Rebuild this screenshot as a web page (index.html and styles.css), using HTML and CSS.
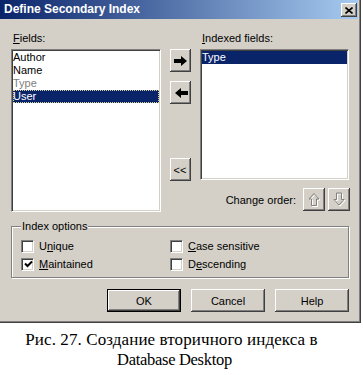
FILE: index.html
```html
<!DOCTYPE html>
<html>
<head>
<meta charset="utf-8">
<link rel="stylesheet" href="styles.css">
</head>
<body>
<div class="dialog">
  <div class="titlebar">
    <span class="title">Define Secondary Index</span>
    <span class="close"><svg width="8" height="7" viewBox="0 0 8 7"><path d="M0.5 0.5 L7.5 6.5 M7.5 0.5 L0.5 6.5" stroke="#000" stroke-width="1.6" fill="none"/></svg></span>
  </div>
  <div class="body">
    <div class="main">
      <div class="col-left">
        <div class="label"><u>F</u>ields:</div>
        <div class="list list-left">
          <div class="item">Author</div>
          <div class="item">Name</div>
          <div class="item disabled">Type</div>
          <div class="item selected focus">User</div>
        </div>
      </div>
      <div class="col-btns">
        <div class="btn sq"><svg width="14" height="10" viewBox="0 0 14 10"><path d="M0 3 H7 V0 L13 5 L7 10 V7 H0 Z" fill="#000"/></svg></div>
        <div class="btn sq gap9"><svg width="14" height="10" viewBox="0 0 14 10"><path d="M14 3 H7 V0 L1 5 L7 10 V7 H14 Z" fill="#000"/></svg></div>
        <div class="btn sq all">&lt;&lt;</div>
      </div>
      <div class="col-right">
        <div class="label"><u>I</u>ndexed fields:</div>
        <div class="list list-right">
          <div class="item selected">Type</div>
        </div>
        <div class="order">
          <span class="order-label">Change order:</span>
          <div class="btn ord"><svg width="13" height="16" viewBox="0 0 13 16"><path d="M2 8 L7 2.5 L12 8 H9.5 V14.5 H4.5 V8 Z" fill="none" stroke="#fff" stroke-width="1"/><path d="M1 7 L6 1.5 L11 7 H8.5 V13.5 H3.5 V7 Z" fill="none" stroke="#808080" stroke-width="1"/></svg></div>
          <div class="btn ord"><svg width="13" height="16" viewBox="0 0 13 16"><path d="M2 8.5 L7 14 L12 8.5 H9.5 V2 H4.5 V8.5 Z" fill="none" stroke="#fff" stroke-width="1"/><path d="M1 7.5 L6 13 L11 7.5 H8.5 V1 H3.5 V7.5 Z" fill="none" stroke="#808080" stroke-width="1"/></svg></div>
        </div>
      </div>
    </div>
    <fieldset class="group">
      <legend>Index options</legend>
      <div class="opts">
        <div class="opt"><span class="cb"></span><span>U<u>n</u>ique</span></div>
        <div class="opt"><span class="cb"></span><span><u>C</u>ase sensitive</span></div>
        <div class="opt"><span class="cb"><svg width="9" height="9" viewBox="0 0 9 9"><path d="M1 3.5 L3.5 6 L8 1.5" stroke="#000" stroke-width="2" fill="none"/></svg></span><span><u>M</u>aintained</span></div>
        <div class="opt"><span class="cb"></span><span>D<u>e</u>scending</span></div>
      </div>
    </fieldset>
    <div class="actions">
      <div class="btn push default">OK</div>
      <div class="btn push">Cancel</div>
      <div class="btn push">Help</div>
    </div>
  </div>
</div>
<div class="caption">
  <div class="cap-line1">Рис. 27. Создание вторичного индекса в</div>
  <div class="cap-line2">Database Desktop</div>
</div>
</body>
</html>
```
FILE: styles.css
```css
html, body {
  margin: 0;
  padding: 0;
  background: #fff;
}
body {
  width: 363px;
  height: 375px;
  overflow: hidden;
  font-family: "Liberation Sans", Arial, sans-serif;
  font-size: 11px;
  color: #000;
}
.dialog {
  width: 361px;
  height: 323px;
  box-sizing: border-box;
  background: #D4D0C8;
  box-shadow: inset -1px -1px 0 #404040, inset -2px -2px 0 #808080;
  padding-right: 3px;
}
.titlebar {
  height: 19px;
  background: linear-gradient(to right, #0A246A, #A6CAF0);
  display: flex;
  justify-content: space-between;
  align-items: flex-start;
}
.title {
  color: #fff;
  font-weight: bold;
  font-size: 12px;
  line-height: 19px;
  padding-left: 4px;
}
.close {
  width: 16px;
  height: 14px;
  margin-top: 3px;
  margin-right: 1px;
  box-sizing: border-box;
  background: #D4D0C8;
  box-shadow: inset -1px -1px 0 #404040, inset 1px 1px 0 #fff, inset -2px -2px 0 #808080;
  display: flex;
  align-items: center;
  justify-content: center;
}
.body {
  padding: 13px 0 0 11px;
}
.main {
  display: flex;
  align-items: flex-start;
}
.label {
  height: 17px;
  line-height: 13px;
  padding-left: 2px;
  box-sizing: border-box;
}
.col-left {
  width: 150px;
}
.list {
  background: #fff;
  box-sizing: border-box;
  border: 1px solid;
  border-color: #808080 #fff #fff #808080;
  box-shadow: inset 1px 1px 0 #404040, inset -1px -1px 0 #D4D0C8;
  padding: 1px;
}
.list-left {
  width: 150px;
  height: 163px;
}
.item {
  height: 13px;
  line-height: 13px;
  white-space: nowrap;
}
.item.disabled {
  color: #808080;
}
.item.selected {
  background: #0A246A;
  color: #fff;
}
.item.focus {
  outline: 1px dotted #d8d4a0;
  outline-offset: -1px;
}
.col-btns {
  width: 21px;
  margin-left: 9px;
  padding-top: 17px;
  display: flex;
  flex-direction: column;
}
.btn {
  background: #D4D0C8;
  box-sizing: border-box;
  box-shadow: inset -1px -1px 0 #404040, inset 1px 1px 0 #fff, inset -2px -2px 0 #808080;
  display: flex;
  align-items: center;
  justify-content: center;
}
.sq {
  width: 21px;
  height: 23px;
}
.gap9 {
  margin-top: 9px;
}
.all {
  margin-top: 54px;
  font-size: 11px;
  padding-right: 1px;
}
.col-right {
  width: 150px;
  margin-left: 9px;
}
.list-right {
  width: 149px;
  height: 131px;
}
.order {
  margin-top: 8px;
  height: 23px;
  display: flex;
  align-items: center;
  justify-content: flex-end;
}
.order-label {
  margin-right: 7px;
}
.ord {
  width: 22px;
  height: 23px;
  margin-left: 3px;
}
.ord:first-of-type {
  margin-left: 0;
}
.group {
  margin: 8px 0 0 0;
  width: 338px;
  box-sizing: border-box;
  border: 1px solid #808080;
  box-shadow: 1px 1px 0 #fff, inset 1px 1px 0 #fff;
  padding: 4px 0 4px 9px;
  min-width: 0;
}
.group legend {
  padding: 0 1px;
  line-height: 13px;
  background: #D4D0C8;
}
.opts {
  display: grid;
  grid-template-columns: 149px 1fr;
  grid-auto-rows: 18px;
}
.opt {
  display: flex;
  align-items: center;
}
.cb {
  width: 13px;
  height: 13px;
  box-sizing: border-box;
  background: #fff;
  border: 1px solid;
  border-color: #808080 #fff #fff #808080;
  box-shadow: inset 1px 1px 0 #404040, inset -1px -1px 0 #D4D0C8;
  margin-right: 5px;
  display: flex;
  align-items: center;
  justify-content: center;
  flex: none;
}
.cb svg {
  margin: 1px 0 0 1px;
}
.actions {
  margin-top: 11px;
  padding-right: 9px;
  display: flex;
  justify-content: flex-end;
  gap: 10px;
}
.push {
  width: 74px;
  height: 23px;
}
.push.default {
  border: 1px solid #000;
  box-shadow: inset -1px -1px 0 #404040, inset 1px 1px 0 #fff, inset -2px -2px 0 #808080;
}
.caption {
  width: 361px;
  margin-top: 7px;
  box-sizing: border-box;
  text-align: center;
  font-family: "Liberation Serif", "Times New Roman", serif;
  font-size: 17px;
  line-height: 20px;
}
.cap-line1 {
  letter-spacing: 0.1px;
  padding-right: 18px;
}
.cap-line2 {
  font-size: 16.5px;
  letter-spacing: -0.3px;
  padding-right: 12px;
}
```
